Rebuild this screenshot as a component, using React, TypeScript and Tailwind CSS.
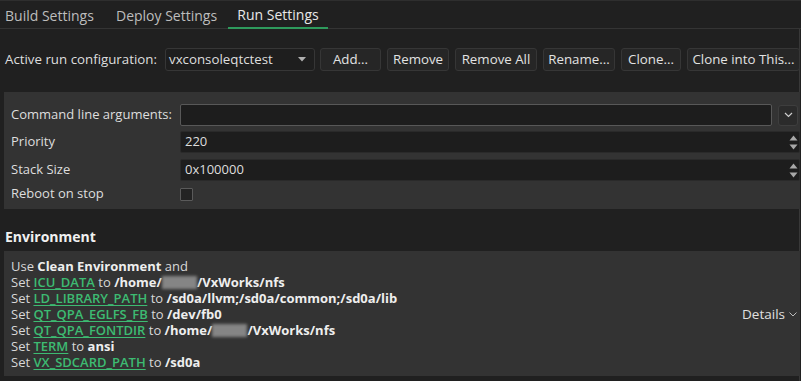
import React from "react";

const Btn = ({ children, w }: { children: React.ReactNode; w: string }) => (
  <div className={`h-[23px] ${w} flex items-center justify-center rounded-[3px] bg-[#262626] border border-[#363636] text-[#e2e2e2]`}>
    {children}
  </div>
);

const Spin = () => (
  <div className="w-[10px] flex flex-col items-center justify-center gap-[3px]">
    <svg width="9" height="6" viewBox="0 0 9 6"><path d="M0.5 5.5 L4.5 0.5 L8.5 5.5 Z" fill="#a8a8a8" /></svg>
    <svg width="9" height="6" viewBox="0 0 9 6"><path d="M0.5 0.5 L4.5 5.5 L8.5 0.5 Z" fill="#a8a8a8" /></svg>
  </div>
);

const Link = ({ children }: { children: React.ReactNode }) => (
  <span className="text-[#3dbb72] font-semibold underline underline-offset-[2px] decoration-[1px]">{children}</span>
);

const Blur = () => (
  <span className="inline-block align-[-2px] w-[35px] h-[13px] bg-[#858585] blur-[1.5px]" />
);

export default function App() {
  return (
    <div
      className="w-[801px] h-[381px] bg-[#202020] text-[#dedede] text-[13px] overflow-hidden flex flex-col"
      style={{ fontFamily: '"Open Sans", "Noto Sans", sans-serif' }}
    >
      <div className="h-[1px] bg-[#2e2e2e]" />
      {/* Tabs */}
      <div className="h-[28px] flex items-stretch border-b border-[#343434] text-[14px]">
        <div className="w-[112px] flex items-center pl-[5px] pt-[1px] text-[#bdbdbd]">Build Settings</div>
        <div className="w-[116px] flex items-center pl-[4px] pt-[1px] text-[#bdbdbd]">Deploy Settings</div>
        <div className="w-[100px] flex items-center justify-center pt-[1px] text-[#e8e8e8] border-b-2 border-[#2e9a5c] -mb-[1px]">Run Settings</div>
      </div>
      <div className="flex-1 flex border-r border-[#383838] mr-[1px]">
        <div className="flex-1 flex flex-col pl-[4px] pr-[3px]">
          {/* Active run config */}
          <div className="mt-[19px] flex items-center h-[23px] text-[13.3px]">
            <div className="w-[161px] pl-[1px]">Active run configuration:</div>
            <div className="h-[23px] w-[150px] flex items-center justify-between pl-[3px] pr-[8px] rounded-[3px] bg-[#1e1e1e] border border-[#363636]">
              <span>vxconsoleqtctest</span>
              <svg width="8" height="5" viewBox="0 0 8 5"><path d="M0 0 L8 0 L4 4.5 Z" fill="#b0b0b0" /></svg>
            </div>
            <div className="ml-[5px] flex gap-[6px]">
              <Btn w="w-[61px]">Add...</Btn>
              <Btn w="w-[62px]">Remove</Btn>
              <Btn w="w-[82px]">Remove All</Btn>
              <Btn w="w-[72px]">Rename...</Btn>
              <Btn w="w-[60px]">Clone...</Btn>
              <Btn w="w-[113px]">Clone into This...</Btn>
            </div>
          </div>
          {/* Settings panel */}
          <div className="mt-[21px] h-[117px] bg-[#333333] flex flex-col pl-[7px] pt-[12px]">
            <div className="flex items-center h-[22px]">
              <div className="w-[169px]">Command line arguments:</div>
              <div className="h-[22px] w-[592px] bg-[#1d1d1d] border border-[#585858] rounded-[2px]" />
              <div className="ml-[6px] h-[21px] w-[20px] flex items-center justify-center bg-[#2b2b2b] border border-[#3e3e3e] rounded-[3px]">
                <svg width="9" height="6" viewBox="0 0 9 6"><path d="M1 1 L4.5 4.5 L8 1" stroke="#cfcfcf" strokeWidth="1.2" fill="none" /></svg>
              </div>
            </div>
            <div className="mt-[5px] flex items-center h-[22px]">
              <div className="w-[169px]">Priority</div>
              <div className="h-[22px] flex-1 flex items-center bg-[#1d1d1d] border border-[#2a2a2a] rounded-[2px] pl-[4px] pr-[1px]">
                <span className="flex-1">220</span>
                <Spin />
              </div>
            </div>
            <div className="mt-[6px] flex items-center h-[22px]">
              <div className="w-[169px]">Stack Size</div>
              <div className="h-[22px] flex-1 flex items-center bg-[#1d1d1d] border border-[#2a2a2a] rounded-[2px] pl-[4px] pr-[1px]">
                <span className="flex-1">0x100000</span>
                <Spin />
              </div>
            </div>
            <div className="mt-[3px] flex items-center h-[20px]">
              <div className="w-[169px]">Reboot on stop</div>
              <div className="w-[13px] h-[13px] bg-[#232323] border border-[#5a5a5a] rounded-[1px]" />
            </div>
          </div>
          {/* Environment */}
          <div className="mt-[17px] h-[20px] flex items-center pl-[1px] font-bold text-[14px] text-[#f0f0f0]">Environment</div>
          <div className="mt-[5px] h-[125px] bg-[#333333] flex items-center pl-[7px] pr-[3px] pt-[1px]">
            <div className="flex-1 flex flex-col leading-[16px] text-[#d8d8d8]">
              <div>Use <b className="text-[#eeeeee]">Clean Environment</b> and</div>
              <div>Set <Link>ICU_DATA</Link> to <b className="text-[#eeeeee]">/home/<Blur />/VxWorks/nfs</b></div>
              <div>Set <Link>LD_LIBRARY_PATH</Link> to <b className="text-[#eeeeee]">/sd0a/llvm;/sd0a/common;/sd0a/lib</b></div>
              <div>Set <Link>QT_QPA_EGLFS_FB</Link> to <b className="text-[#eeeeee]">/dev/fb0</b></div>
              <div>Set <Link>QT_QPA_FONTDIR</Link> to <b className="text-[#eeeeee]">/home/<Blur />/VxWorks/nfs</b></div>
              <div>Set <Link>TERM</Link> to <b className="text-[#eeeeee]">ansi</b></div>
              <div>Set <Link>VX_SDCARD_PATH</Link> to <b className="text-[#eeeeee]">/sd0a</b></div>
            </div>
            <div className="flex items-center gap-[4px] text-[#e0e0e0] text-[13.5px]">
              <span>Details</span>
              <svg width="8" height="5" viewBox="0 0 8 5"><path d="M0.5 0.5 L4 4 L7.5 0.5" stroke="#bdbdbd" strokeWidth="1" fill="none" /></svg>
            </div>
          </div>
        </div>
      </div>
    </div>
  );
}
